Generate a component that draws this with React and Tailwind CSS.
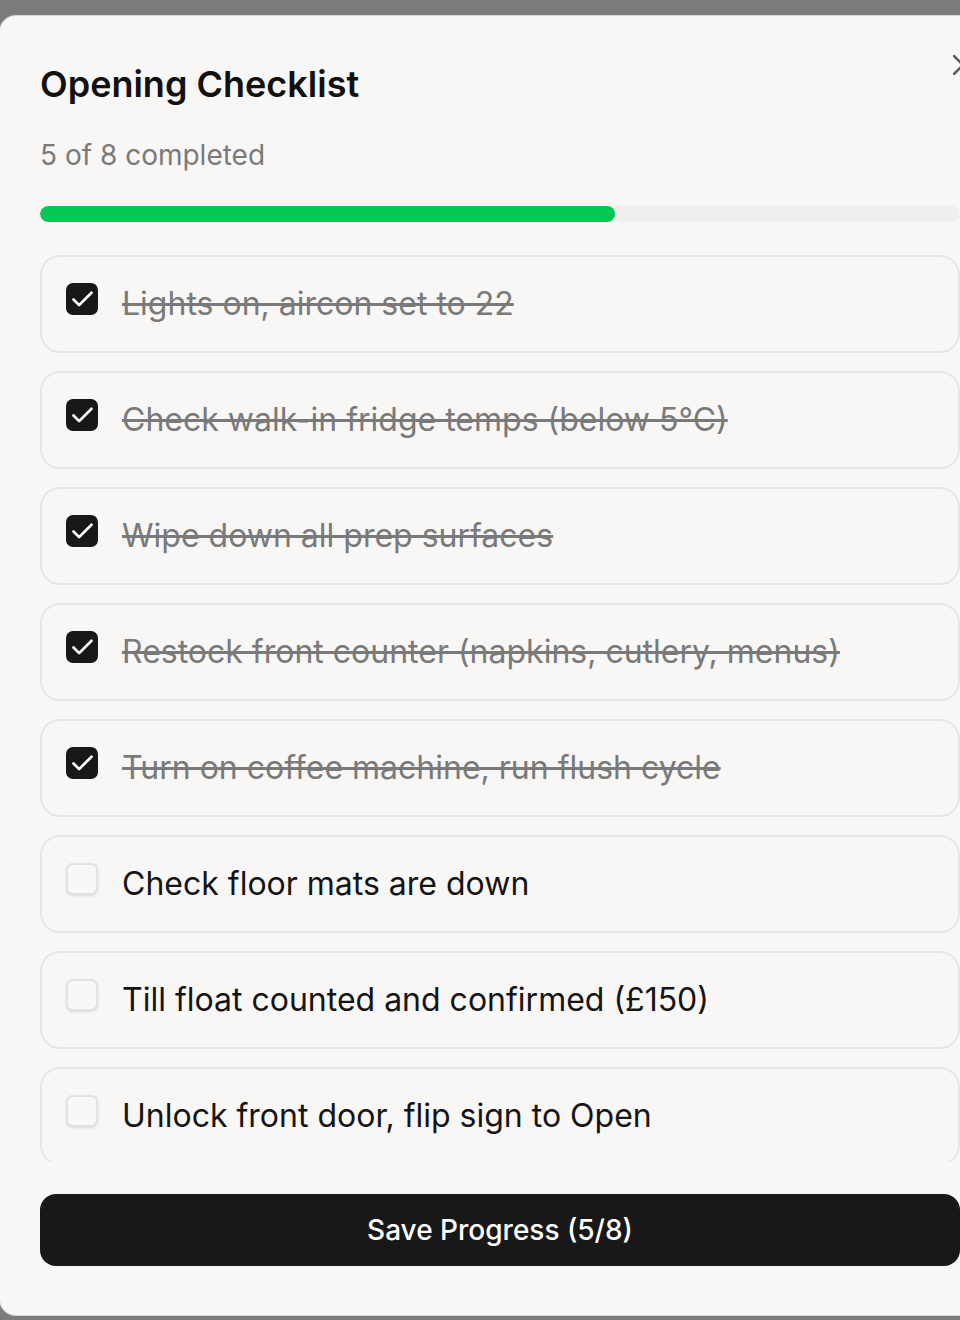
import { Check } from 'lucide-react'

const ITEMS = [
  { label: 'Lights on, aircon set to 22', done: true },
  { label: 'Check walk-in fridge temps (below 5°C)', done: true },
  { label: 'Wipe down all prep surfaces', done: true },
  { label: 'Restock front counter (napkins, cutlery, menus)', done: true },
  { label: 'Turn on coffee machine, run flush cycle', done: true },
  { label: 'Check floor mats are down', done: false },
  { label: 'Till float counted and confirmed (£150)', done: false },
  { label: 'Unlock front door, flip sign to Open', done: false },
]

function ChecklistRow({ label, done }) {
  return (
    <div className="flex items-start gap-6 rounded-[20px] border-2 border-[#e7e6e4] px-6 py-6">
      {done ? (
        <span className="mt-[2px] flex h-8 w-8 shrink-0 items-center justify-center rounded-[7px] bg-[#181818] text-white">
          <Check size={27} strokeWidth={2.4} />
        </span>
      ) : (
        <span className="mt-[2px] h-8 w-8 shrink-0 rounded-[7px] border-2 border-[#e4e3e1] bg-[#f9f8f6] shadow-sm" />
      )}
      <span
        className={
          done
            ? 'whitespace-nowrap text-[32px] leading-[46px] text-[#7a7a7a] line-through decoration-[#7a7a7a]'
            : 'whitespace-nowrap text-[32px] leading-[46px] text-[#141414]'
        }
      >
        {label}
      </span>
    </div>
  )
}

export default function App() {
  const done = ITEMS.filter((i) => i.done).length
  const pct = (done / ITEMS.length) * 100

  return (
    <div className="h-[1320px] w-[960px] overflow-hidden bg-[#7b7b7b] pt-[16px] font-['Inter',sans-serif]">
      {/* Dialog */}
      <div className="relative flex h-[1299px] w-[1000px] flex-col rounded-[16px] bg-[#f8f7f5] px-10 pt-[48px] pb-[48px] ring-1 ring-[#d6d6d6]">
        {/* Close */}
        <svg
          className="absolute left-[953px] top-[39px]"
          width="20"
          height="20"
          viewBox="0 0 20 20"
          fill="none"
          stroke="#5c5c5c"
          strokeWidth="2.5"
          strokeLinecap="round"
        >
          <path d="M1 1l18 18M19 1L1 19" />
        </svg>

        <h2 className="text-[36px] font-semibold leading-[40px] text-[#111]">
          Opening Checklist
        </h2>
        <p className="mt-[33px] text-[28px] leading-[36px] text-[#7a7a7a]">
          {done} of {ITEMS.length} completed
        </p>

        {/* Progress */}
        <div className="mt-[33px] h-4 w-full overflow-hidden rounded-full bg-[#f0efed]">
          <div className="h-full rounded-full bg-[#05c755]" style={{ width: `${pct}%` }} />
        </div>

        {/* List */}
        <div className="mt-[33px] h-[906px] overflow-hidden">
          <div className="flex flex-col gap-[18px]">
            {ITEMS.map((item) => (
              <ChecklistRow key={item.label} {...item} />
            ))}
          </div>
        </div>

        <button className="mt-[33px] h-[72px] w-full rounded-[16px] bg-[#181818] text-[28px] font-medium text-white">
          Save Progress ({done}/{ITEMS.length})
        </button>
      </div>
    </div>
  )
}
